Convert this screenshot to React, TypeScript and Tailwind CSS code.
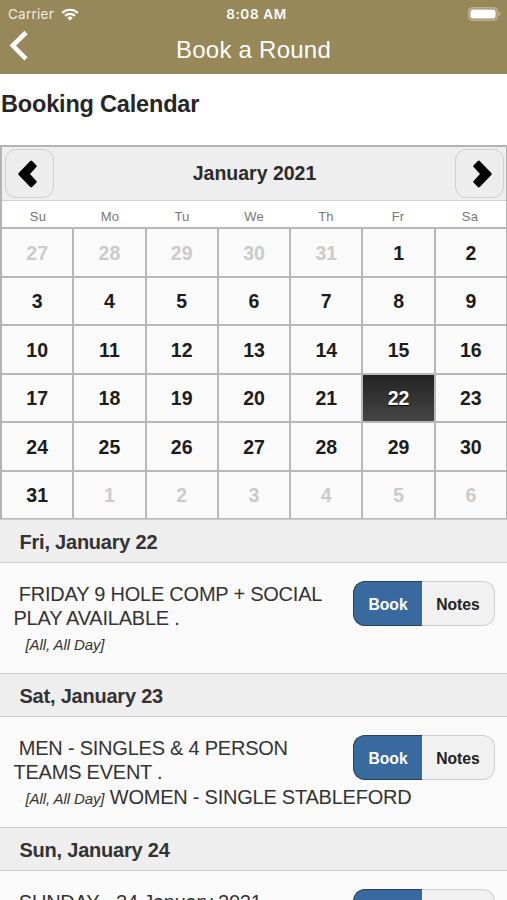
import clsx from 'clsx';

const weekdays = ['Su', 'Mo', 'Tu', 'We', 'Th', 'Fr', 'Sa'];

// 27 Dec - 6 Feb
const days = [
    ...[27, 28, 29, 30, 31].map((n) => ({ n, muted: true })),
    ...Array.from({ length: 31 }, (_, i) => ({ n: i + 1, muted: false })),
    ...[1, 2, 3, 4, 5, 6].map((n) => ({ n, muted: true })),
];

const events = [
    {
        date: 'Fri, January 22',
        lines: ['\u00a0FRIDAY 9 HOLE COMP + SOCIAL', 'PLAY AVAILABLE .'],
        time: '[All, All Day]',
        extra: '',
    },
    {
        date: 'Sat, January 23',
        lines: ['\u00a0MEN - SINGLES & 4 PERSON', 'TEAMS EVENT .'],
        time: '[All, All Day]',
        extra: 'WOMEN - SINGLE STABLEFORD',
    },
    {
        date: 'Sun, January 24',
        lines: ['\u00a0SUNDAY - 24 January 2021'],
        time: '',
        extra: '',
    },
];

function StatusBar() {
    return (
        <div className="grid h-7 grid-cols-3 items-center pr-[6px] pl-2 font-['Inter'] text-[13.5px]">
            <div className="flex items-center gap-[7px]">
                <span className="tracking-[0.25px] opacity-85">Carrier</span>
                <svg width="18" height="13" viewBox="0 0 18 13" fill="none" stroke="currentColor" strokeWidth="2.2">
                    <path d="M1.2 4.9a11.2 11.2 0 0 1 15.6 0" />
                    <path d="M4.1 7.9a7.1 7.1 0 0 1 9.8 0" />
                    <path d="M9 12.6 6.3 9.9a3.9 3.9 0 0 1 5.4 0z" fill="currentColor" stroke="none" />
                </svg>
            </div>
            <div className="pl-[4px] text-center font-semibold tracking-[0.65px]">8:08 AM</div>
            <div className="flex justify-end">
                <svg width="33" height="14" viewBox="0 0 33 14">
                    <rect x="0.8" y="0.8" width="28.4" height="12.4" rx="3.6" fill="none" stroke="#fff" strokeOpacity="0.45" strokeWidth="1.2" />
                    <rect x="2.4" y="2.4" width="25.2" height="9.2" rx="2" fill="#fff" />
                    <path d="M30.7 4.8c1.6.6 1.6 3.8 0 4.4z" fill="#fff" fillOpacity="0.5" />
                </svg>
            </div>
        </div>
    );
}

function Chevron({ flip = false }: { flip?: boolean }) {
    return (
        <svg width="20" height="28" viewBox="0 0 20 28" className={clsx(flip && '-scale-x-100')}>
            <path
                d="M1.6 14 13.2 2l4.2 4.2L10.4 14l7 7.8-4.2 4.2z"
                fill="#000"
                stroke="#000"
                strokeWidth="2.6"
                strokeLinejoin="round"
            />
        </svg>
    );
}

function NavButton({ flip = false }: { flip?: boolean }) {
    return (
        <button
            className={clsx(
                'flex size-[49px] items-center justify-center rounded-[11px] border border-[#cfcfcf] bg-[#ededed]',
                flip ? 'pl-[4px]' : 'pr-[4px]'
            )}
        >
            <Chevron flip={flip} />
        </button>
    );
}

function Calendar() {
    return (
        <section className="h-[374px] border-2 border-r border-b-0 border-[#b3b3b3]">
            <div className="flex h-[54px] items-center justify-between border-b border-[#cfcfcf] bg-[#eee] pr-[2px] pl-[3px]">
                <NavButton />
                <h2 className="text-[19.5px] font-bold text-[#2b2b2b]">January 2021</h2>
                <NavButton flip />
            </div>
            <div className="grid h-[26px] grid-cols-7 text-center text-[13px] leading-[31px] tracking-[0.2px] text-[#777]">
                {weekdays.map((d) => (
                    <div key={d}>{d}</div>
                ))}
            </div>
            <div className="grid h-[293px] grid-cols-7 grid-rows-6 gap-[2px] border-y-2 border-[#b8b8b8] bg-[#b8b8b8]">
                {days.map(({ n, muted }, i) => (
                    <div
                        key={i}
                        className={clsx(
                            'flex items-center justify-center pt-[2px] text-[19.5px] font-bold',
                            muted && 'bg-[#fafafa] text-[#cbcbcb]',
                            !muted && n !== 22 && 'bg-[#fafafa] text-[#1c1c1c]',
                            !muted && n === 22 && 'bg-linear-to-b from-[#242424] to-[#454545] text-white [text-shadow:0_1px_1px_#000]'
                        )}
                    >
                        {n}
                    </div>
                ))}
            </div>
        </section>
    );
}

function Actions() {
    return (
        <div className="float-right flex h-[45px] text-[15.7px] font-bold tracking-normal">
            <button className="w-[69px] rounded-l-[12px] border border-r-0 border-[#2b3f52] bg-[#38699f] pt-[4px] text-white">
                Book
            </button>
            <button className="w-[73px] rounded-r-[12px] border border-l-0 border-[#cfcfcf] bg-[#f1f1f1] pt-[4px] text-[#222]">
                Notes
            </button>
        </div>
    );
}

export default function App() {
    return (
        <div className="h-[900px] w-[507px] overflow-hidden bg-white font-['Liberation_Sans',sans-serif] text-[#333]">
            <header className="h-[74px] bg-[#97885a] text-white">
                <StatusBar />
                <div className="grid h-[46px] grid-cols-[40px_1fr_40px]">
                    <svg width="40" height="40" viewBox="0 0 40 40">
                        <path d="M26 4.5 12.8 17.6 26 30.8" fill="none" stroke="#fff" strokeWidth="4.6" />
                    </svg>
                    <h1 className="text-center text-2xl leading-[44px] tracking-[0.25px]">Book a Round</h1>
                </div>
            </header>

            <h2 className="h-[71px] pt-[12px] pl-px text-[23.5px] leading-[36px] font-bold tracking-[-0.18px] text-[#262626]">
                Booking Calendar
            </h2>

            <Calendar />

            {events.map((event) => (
                <section key={event.date}>
                    <h3 className="h-[44px] border-y border-[#cdcdcd] bg-[#eee] pl-[19.5px] text-[20px] leading-[45px] font-bold tracking-[-0.22px]">
                        {event.date}
                    </h3>
                    <div className="h-[110px] bg-[#fafafa] pt-[18px] pr-[12px] pl-[13.5px] text-[20px] leading-[24.4px] tracking-[-0.23px] whitespace-nowrap">
                        <Actions />
                        <div className="pt-px">
                            {event.lines.map((line) => (
                                <div key={line}>{line}</div>
                            ))}
                            {event.time && (
                                <div>
                                    <em className="pl-[12px] text-[15px] tracking-[-0.1px]">{event.time}</em> {event.extra}
                                </div>
                            )}
                        </div>
                    </div>
                </section>
            ))}
        </div>
    );
}
